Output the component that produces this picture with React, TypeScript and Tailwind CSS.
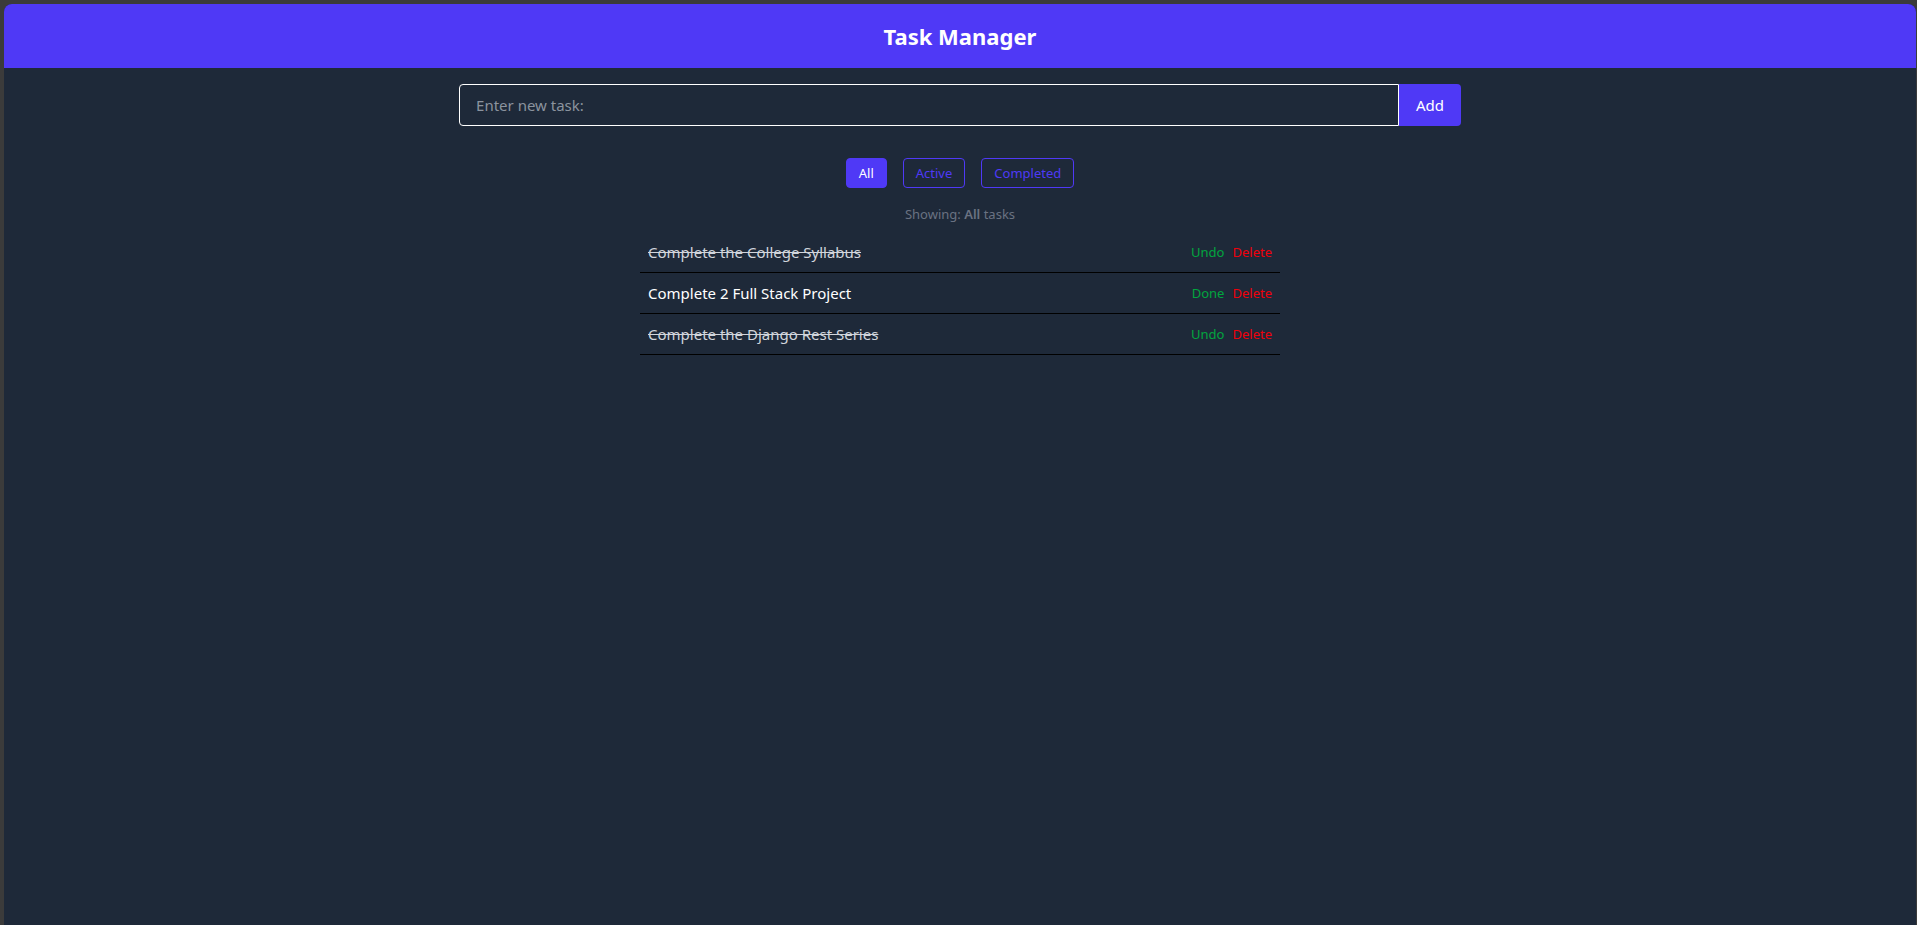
import { useState, type FormEvent } from "react";

type Filter = "All" | "Active" | "Completed";

interface Task {
  id: number;
  text: string;
  done: boolean;
}

const initialTasks: Task[] = [
  { id: 1, text: "Complete the College Syllabus", done: true },
  { id: 2, text: "Complete 2 Full Stack Project", done: false },
  { id: 3, text: "Complete the Django Rest Series", done: true },
];

const filters: Filter[] = ["All", "Active", "Completed"];

function TaskForm({ onAdd }: { onAdd: (text: string) => void }) {
  const [text, setText] = useState("");

  const submit = (e: FormEvent) => {
    e.preventDefault();
    if (!text.trim()) return;
    onAdd(text.trim());
    setText("");
  };

  return (
    <form onSubmit={submit} className="mx-auto flex w-[52.4%] py-4">
      <input
        type="text"
        aria-label="New task"
        placeholder="Enter new task:"
        value={text}
        onChange={(e) => setText(e.target.value)}
        className="min-w-0 flex-1 rounded-l border border-white px-4 py-2 text-[15px] leading-6 text-white outline-none placeholder:text-[#8b939e]"
      />
      <button type="submit" className="min-w-[62px] rounded-r bg-indigo-600 px-4 text-[15px] leading-6 text-white">
        Add
      </button>
    </form>
  );
}

export default function App() {
  const [tasks, setTasks] = useState<Task[]>(initialTasks);
  const [filter, setFilter] = useState<Filter>("All");

  const visible = tasks.filter((t) => filter === "All" || (filter === "Completed") === t.done);

  const toggle = (id: number) => setTasks(tasks.map((t) => (t.id === id ? { ...t, done: !t.done } : t)));
  const remove = (id: number) => setTasks(tasks.filter((t) => t.id !== id));
  const add = (text: string) => setTasks([...tasks, { id: Date.now(), text, done: false }]);

  return (
    <div className="flex min-h-screen flex-col bg-[#3b3b3b] pt-1 pr-px pl-1 font-['Noto_Sans','Open_Sans',sans-serif]">
      <div className="flex-1 overflow-hidden rounded-t-lg bg-gray-800">
        <header className="bg-indigo-600 p-4 text-center text-white">
          <h1 className="text-[22px] leading-8 font-bold">Task Manager</h1>
        </header>

        <main>
          <TaskForm onAdd={add} />

          <div className="mt-4 flex justify-center gap-4">
            {filters.map((name) => (
              <button
                key={name}
                type="button"
                aria-pressed={filter === name}
                onClick={() => setFilter(name)}
                className={`rounded border border-indigo-600 px-3 py-1 text-[13px] leading-5 ${
                  filter === name ? "bg-indigo-600 text-white" : "text-indigo-600"
                }`}
              >
                {name}
              </button>
            ))}
          </div>

          <p className="mt-4 text-center text-[13px] leading-5 text-gray-500">
            Showing: <span className="font-semibold">{filter}</span> tasks
          </p>

          <ul className="mx-auto mt-2 w-full max-w-[640px]">
            {visible.map((task) => (
              <li key={task.id} className="flex items-center justify-between border-b border-black p-2">
                <span className={`text-[15px] leading-6 ${task.done ? "text-gray-300 line-through" : "text-white"}`}>
                  {task.text}
                </span>
                <div className="flex gap-2 text-[13px] leading-5">
                  <button type="button" onClick={() => toggle(task.id)} className="text-green-600">
                    {task.done ? "Undo" : "Done"}
                  </button>
                  <button type="button" onClick={() => remove(task.id)} className="text-[#f0000b]">
                    Delete
                  </button>
                </div>
              </li>
            ))}
          </ul>
        </main>
      </div>
    </div>
  );
}
